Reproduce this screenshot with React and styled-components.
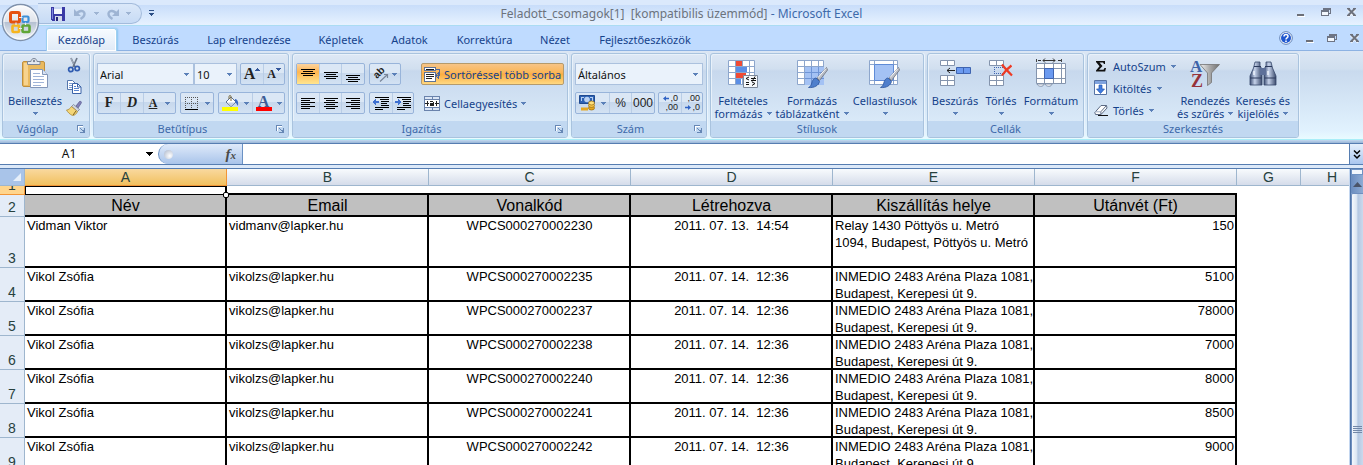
import React from "react";
import styled, { createGlobalStyle, css } from "styled-components";

const Global = createGlobalStyle`
  * { box-sizing: border-box; }
  html, body { margin: 0; height: 100%; overflow: hidden; }
  body { font-family: "Noto Sans", "Open Sans", sans-serif; font-size: 11px; color: #15428b; }
  #root { height: 100%; }
  button, select, input { font: inherit; color: inherit; margin: 0; padding: 0; border: 0; background: none; }
  svg { display: block; flex: none; overflow: visible; }
`;

const Window = styled.div`
  display: flex;
  flex-direction: column;
  height: 100vh;
  overflow: hidden;
  background: #bfdbff;
`;

/* ---------- title bar ---------- */

const TitleBar = styled.header`
  position: relative;
  display: grid;
  grid-template-columns: 1fr auto 1fr;
  flex: none;
  height: 26px;
  border-bottom: 1px solid #abdcf3;
  background: linear-gradient(#dbe9fc 0 5px, #c8ddfa 5px, #e7f2ff 100%);
`;

const OrbButton = styled.button`
  position: absolute;
  z-index: 2;
  left: 1px;
  top: 3px;
`;

const QuickAccess = styled.div`
  display: flex;
  align-items: flex-start;
  gap: 7px;
  padding: 3px 0 0 38px;
`;

const QuickPill = styled.div`
  display: flex;
  align-items: center;
  width: 104px;
  height: 21px;
  padding-left: 13px;
  border: 1px solid #a3bbdb;
  border-left: 0;
  border-radius: 0 11px 11px 0;
  background: linear-gradient(#dbe8f9, #c7dbf5);
`;

const QuickButton = styled.button`
  display: grid;
  place-items: center;
  width: ${(p) => p.$w}px;
  height: 19px;
`;

const Caption = styled.h1`
  margin: 0;
  padding-top: 5px;
  font-size: 12px;
  font-weight: 400;
  line-height: 18px;
  color: #3e6aaa;
  white-space: pre;
`;

const DocumentName = styled.span`
  color: #6c737d;
`;

const WindowControls = styled.div`
  display: flex;
  justify-content: flex-end;
  align-items: center;
  gap: ${(p) => p.$gap}px;
  margin-left: auto;
  padding: 0 ${(p) => p.$end}px ${(p) => p.$lift ?? 0}px 0;
`;

const IconButton = styled.button`
  display: grid;
  place-items: center;
`;

/* ---------- tabs ---------- */

const TabBar = styled.nav`
  display: flex;
  flex: none;
  height: 25px;
  padding: 2px 0 0 43px;
  border-bottom: 1px solid #8db2e3;
  background: #bfdbff;
`;

const Tab = styled.button`
  width: ${(p) => p.$w}px;
  height: 23px;
  border-radius: 3px 3px 0 0;
  line-height: 22px;
  text-align: center;
  ${(p) =>
    p.$active &&
    css`
      width: ${p.$w - 4}px;
      margin: 0 1px 0 3px;
      background: linear-gradient(#f7fbff, #dfeaf7);
      border: 1px solid #9fd0f0;
      border-bottom: 0;
      box-shadow: inset 0 0 0 1px #fff, 1px 0 2px #86c4f0;
    `}
`;

/* ---------- ribbon ---------- */

const Ribbon = styled.section`
  display: flex;
  gap: 3px;
  flex: none;
  height: 89px;
  padding: 2px 2px 1px;
  border-bottom: 1px solid #a9eef8;
  background: linear-gradient(#dbe6f4 0, #d0dfef 18px, #c9daee 20px, #e1f2fe 80px, #e9fbff);
`;

const RibbonEdge = styled.div`
  flex: none;
  height: 4px;
  border-bottom: 1px solid #567db1;
  background: linear-gradient(#c3d9f0, #99b5d6);
`;

const GroupBox = styled.div`
  display: flex;
  flex-direction: column;
  flex: none;
  width: ${(p) => p.$w}px;
  height: 85px;
  border: 1px solid #a9c3de;
  border-radius: 3px;
  box-shadow: inset 1px 1px 0 #e8f1fa, 1px 0 0 #eaf4fd;
  background: linear-gradient(#dee8f5 0, #d1dfef 15px, #c7d8ed 17px, #d9e9f8 67px);
  overflow: hidden;
`;

const GroupBody = styled.div`
  display: flex;
  height: 67px;
  padding: 0 ${(p) => p.$pad ?? 3}px;
`;

const GroupFooter = styled.div`
  display: flex;
  align-items: center;
  height: 16px;
  background: #c1d8f1;
  color: #3e6aaa;
`;

const GroupTitle = styled.span`
  flex: 1;
  text-align: center;
  line-height: 16px;
`;

const Launcher = styled.button`
  display: grid;
  place-items: center;
  width: 17px;
  height: 16px;
`;

const Rows = styled.div`
  display: flex;
  flex-direction: column;
  gap: 7px;
  padding-top: 9px;
`;

const Row = styled.div`
  display: flex;
  gap: ${(p) => p.$gap ?? 4}px;
`;

const Cluster = styled.div`
  display: flex;
  height: 22px;
  border: 1px solid #98b4da;
  border-radius: 2px;
  background: linear-gradient(#dbe7f5 0 9px, #c6d7ec 9px, #d3e2f3);
`;

const ToolButton = styled.button`
  display: flex;
  align-items: center;
  justify-content: center;
  gap: ${(p) => p.$gap ?? 5}px;
  width: ${(p) => p.$w}px;
  height: 20px;
  & + & { border-left: 1px solid #b9cde6; }
  ${(p) =>
    p.$on &&
    css`
      background: linear-gradient(#fbd3a0, #ffb650 40%, #ffe58f);
    `}
`;

const Glyph = styled.span`
  font-family: "Liberation Serif", serif;
  font-size: ${(p) => p.$size ?? 16}px;
  font-weight: 700;
  line-height: 18px;
  font-style: ${(p) => (p.$italic ? "italic" : "normal")};
  text-decoration: ${(p) => (p.$under ? "underline" : "none")};
  color: ${(p) => p.$color ?? "#222"};
`;

const NumberGlyph = styled.span`
  font-family: "Liberation Sans Narrow", "Liberation Sans", sans-serif;
  font-size: 12px;
  line-height: 18px;
  color: #222;
`;

const DecimalGlyph = styled.span`
  display: flex;
  flex-direction: column;
  align-items: flex-end;
  width: 16px;
  font-family: "Liberation Sans Narrow", "Liberation Sans", sans-serif;
  font-size: 9px;
  line-height: 9px;
  color: #222;
`;

const DecimalLine = styled.span`
  display: flex;
  align-items: center;
  gap: 1px;
`;

const ComboFrame = styled.label`
  display: grid;
  align-items: center;
  width: ${(p) => p.$w}px;
  height: 22px;
  border: 1px solid #abc1de;
  background: #eaf2fb;
  & > * { grid-area: 1 / 1; }
  & > svg { justify-self: end; margin-right: 4px; pointer-events: none; }
`;

const ComboSelect = styled.select`
  appearance: none;
  width: 100%;
  height: 20px;
  padding-left: 2px;
  border-radius: 0;
  outline: 0;
  color: #111;
`;

const Divider = styled.span`
  width: 1px;
  height: 55px;
  margin: 6px 3px 0 4px;
  background: #9dbbe0;
`;

const WideButton = styled.button`
  display: flex;
  align-items: center;
  gap: 4px;
  width: 143px;
  height: 22px;
  padding-left: 2px;
  border: 1px solid ${(p) => (p.$on ? "#b49a6c" : "transparent")};
  border-radius: 2px;
  white-space: nowrap;
  ${(p) =>
    p.$on &&
    css`
      background: linear-gradient(#f6c487, #fbb554 45%, #fbac3f 50%, #ffd881);
    `}
`;

const LargeButton = styled.button`
  display: flex;
  flex-direction: column;
  align-items: center;
  width: ${(p) => p.$w}px;
  padding-top: 4px;
  line-height: 13px;
  white-space: nowrap;
  & > svg:first-child { margin-bottom: 4px; }
`;

const LabelLine = styled.span`
  display: flex;
  align-items: center;
  justify-content: center;
  gap: 4px;
  height: 13px;
`;

const SmallStack = styled.div`
  display: flex;
  flex-direction: column;
  gap: ${(p) => p.$gap ?? 0}px;
  padding-top: ${(p) => p.$top ?? 0}px;
  width: ${(p) => p.$w}px;
`;

const SmallButton = styled.button`
  display: flex;
  align-items: center;
  gap: 5px;
  height: 22px;
  white-space: nowrap;
`;

/* ---------- formula bar ---------- */

const FormulaBar = styled.div`
  display: flex;
  flex: none;
  height: 21px;
  border-bottom: 1px solid #567db1;
  background: #fff;
`;

const NameBox = styled.label`
  display: flex;
  align-items: center;
  width: 158px;
`;

const NameInput = styled.input`
  width: 138px;
  margin-right: 8px;
  outline: 0;
  text-align: center;
  font-size: 12px;
  line-height: 20px;
  color: #111;
`;

const FormulaTools = styled.div`
  display: flex;
  align-items: center;
  justify-content: space-between;
  width: 85px;
  padding: 0 5px;
  border: solid #6a91c4;
  border-width: 0 1px;
  border-radius: 11px 0 0 11px;
  background: linear-gradient(#dfeafa, #a9c4ea);
`;

const Knob = styled.span`
  width: 9px;
  height: 9px;
  border-radius: 50%;
  background: radial-gradient(circle at 65% 65%, #fff, #a9b4c8);
`;

const FxButton = styled.button`
  padding-right: 1px;
  font-family: "Liberation Serif", serif;
  font-size: 15px;
  font-weight: 700;
  font-style: italic;
  line-height: 18px;
  color: #4a4a4a;
  & > small { font-size: 11px; }
`;

const FormulaInput = styled.input`
  flex: 1;
  min-width: 0;
  padding: 0 4px;
  outline: 0;
`;

const ExpandButton = styled.button`
  display: grid;
  place-items: center;
  width: 14px;
  border-left: 1px solid #567db1;
  background: linear-gradient(#e6f0fc, #a9c6ef);
`;

const SheetEdge = styled.div`
  flex: none;
  height: 4px;
  border-bottom: 1px solid #567db1;
  background: #dce9f9;
`;

/* ---------- sheet ---------- */

const SheetArea = styled.main`
  display: flex;
  flex: 1;
  min-height: 0;
  background: #fff;
`;

const SheetViewport = styled.div`
  flex: 1;
  min-width: 0;
  overflow: hidden;
  border-right: 1px solid #c4d7f0;
`;

const Sheet = styled.table`
  width: calc(100% + 15px);
  table-layout: fixed;
  border-collapse: separate;
  border-spacing: 0;
  font-family: "Liberation Sans", Arial, sans-serif;
  font-size: 13px;
  line-height: 17px;
  color: #000;
`;

const ColumnHead = styled.th`
  height: 17px;
  padding: 0;
  border: solid #9eb6ce;
  border-width: 0 1px 1px 0;
  background: linear-gradient(#f8fbfd, #d5dcea);
  color: #27413e;
  font-size: 14px;
  font-weight: 400;
  line-height: 16px;
  ${(p) =>
    p.$selected &&
    css`
      border-color: #f29536;
      background: linear-gradient(#f9d99f, #f1c15f);
    `}
`;

const Corner = styled.td`
  padding: 0;
  border: solid #9eb6ce;
  border-width: 0 1px 1px 0;
  background: #a9c4e9;
  & > svg { margin: 0 2px 0 auto; }
`;

const RowHead = styled.th`
  padding: 0;
  border: solid #9eb6ce;
  border-width: 0 1px 1px 0;
  background: ${(p) => (p.$selected ? "#ffd58d" : "#e4ecf7")};
  ${(p) => p.$selected && "border-color: #f29536;"}
  color: #27413e;
  font-size: 14px;
  font-weight: 400;
  vertical-align: bottom;
`;

const RowNumber = styled.div`
  display: flex;
  align-items: flex-end;
  justify-content: center;
  height: ${(p) => p.$h}px;
  overflow: hidden;
`;

const Cell = styled.td`
  padding: 0;
  vertical-align: top;
  text-align: ${(p) => p.$align ?? "left"};
  ${(p) => p.$framed && "border: solid #000; border-width: 0 2px 2px 0;"}
  ${(p) => p.$under && "border-bottom: 2px solid #000;"}
  ${(p) => p.$heading && "background: #c0c0c0; font-size: 16px; line-height: 21px;"}
`;

const CellText = styled.div`
  height: ${(p) => p.$h}px;
  padding: 0 1px 0 2px;
  overflow: hidden;
  white-space: pre;
`;

const ActiveCell = styled.td`
  position: relative;
  padding: 0;
  border: solid #000;
  border-width: 1px 2px 1px 1px;
`;

const FillHandle = styled.span`
  position: absolute;
  z-index: 1;
  right: -4px;
  bottom: -4px;
  width: 6px;
  height: 6px;
  border: 1px solid #000;
  border-radius: 2px;
  background: #fff;
`;

const ScrollBar = styled.div`
  display: flex;
  flex-direction: column;
  flex: none;
  width: 13px;
  border-left: 1px solid #4f74a8;
  background: #8faed6;
`;

const SplitHandle = styled.span`
  height: 6px;
  border: 1px solid #6f93c4;
  background: #f2f7fd;
`;

const ScrollUp = styled.button`
  display: grid;
  place-items: center;
  height: 18px;
  background: linear-gradient(90deg, #6b8dbf, #8dabd4);
`;

const ScrollThumb = styled.div`
  display: flex;
  flex-direction: column;
  justify-content: flex-end;
  align-items: center;
  flex: 1;
  padding-bottom: 31px;
  border: solid #6f8fbf;
  border-width: 1px 0 0 1px;
  border-radius: 2px 0 0 0;
  background: linear-gradient(90deg, #f4f8fd, #dde7f3 40%, #b3c7e2 55%, #cbd9ec);
`;

/* ---------- icons ---------- */

const Svg = ({ w, h, children, crisp, ...rest }) => (
  <svg width={w} height={h} viewBox={`0 0 ${w} ${h}`} fill="none" aria-hidden="true" shapeRendering={crisp ? "crispEdges" : "auto"} {...rest}>
    {children}
  </svg>
);

const Arrow = ({ color = "#5b80b8" }) => (
  <Svg w={5} h={3} crisp>
    <path d="M0 0h5v1H0zM1 1h3v1H1zM2 2h1v1H2z" fill={color} />
  </Svg>
);

const Orb = () => (
  <Svg w={39} h={39}>
    <defs>
      <linearGradient id="orb" x1="0" y1="0" x2="0" y2="1">
        <stop offset="0" stopColor="#fdfdfe" />
        <stop offset=".48" stopColor="#dfe3ea" />
        <stop offset=".5" stopColor="#b6c1d2" />
        <stop offset="1" stopColor="#fafcff" />
      </linearGradient>
    </defs>
    <circle cx="19.500" cy="19.500" r="18" fill="url(#orb)" stroke="#7f91ab" strokeWidth="1.300" />
    <circle cx="19.500" cy="19.500" r="16.600" stroke="#fff" strokeOpacity=".7" />
    <rect x="9.500" y="9.500" width="9" height="9.500" rx="1.500" stroke="#e5500f" strokeWidth="3" />
    <rect x="21.500" y="13.500" width="6" height="5.500" rx="1" stroke="#3c8fd8" strokeWidth="2.200" />
    <rect x="11.500" y="22.500" width="6.500" height="6.500" rx="1" stroke="#f6b51e" strokeWidth="2.600" />
    <rect x="21.500" y="22.500" width="7" height="6.500" rx="1" stroke="#5fa637" strokeWidth="2.600" />
    <path d="M18 14.500h3.500M18 25.500h3M15 19.500v2.500M24.500 19.500v2.500" stroke="#e8eef6" strokeWidth="1.200" />
  </Svg>
);

const Save = () => (
  <Svg w={14} h={14} crisp>
    <path d="M0 0h14v14H1l-1-1z" fill="#3a3aa6" />
    <path d="M1 1h1v11H1z" fill="#7d86dd" />
    <path d="M3 0h8v7H3z" fill="#f4f7fd" />
    <path d="M3 0h8v2H3z" fill="#c7d6f2" />
    <path d="M4 9h7v5H4z" fill="#d3d9ea" />
    <path d="M5 10h2v4H5z" fill="#25257a" />
  </Svg>
);

const Undo = () => (
  <Svg w={14} h={14}>
    <path d="M3.500 7.500C5 3.500 11 2.500 11.500 6.500c.2 2.500-1.500 4-4 5.500" stroke="#9eb4d3" strokeWidth="2.400" />
    <path d="M1 2v7h7z" fill="#9eb4d3" />
  </Svg>
);

const Redo = () => (
  <Svg w={14} h={14}>
    <path d="M10.500 7.500C9 3.500 3 2.500 2.500 6.500c-.2 2.500 1.500 4 4 5.500" stroke="#9eb4d3" strokeWidth="2.400" />
    <path d="M13 2v7H6z" fill="#9eb4d3" />
  </Svg>
);

const Customize = () => (
  <Svg w={5} h={6} crisp>
    <path d="M0 0h5v1H0zM0 3h5v1H0zM1 4h3v1H1zM2 5h1v1H2z" fill="#2c4f86" />
  </Svg>
);

const Minimize = () => (
  <Svg w={8} h={9} crisp>
    <path d="M0 6h7v2H0z" fill="#6c6f78" />
    <path d="M1 8h7v1H1z" fill="#fff" />
  </Svg>
);

const Restore = () => (
  <Svg w={10} h={9} crisp>
    <path d="M2 0h8v2H2zM9 2h1v4H9zM8 5h1v1H8z" fill="#6d7484" />
    <path d="M0 2h8v2H0zM0 4h1v4H0zM7 4h1v4H7zM0 7h8v1H0z" fill="#6d7484" />
    <path d="M1 4h6v3H1z" fill="#f2f7fd" />
  </Svg>
);

const Close = () => (
  <Svg w={9} h={9}>
    <path d="M1 1.500l7 7M8 1.500l-7 7" stroke="#fff" strokeWidth="2" />
    <path d="M1 .5l7 7M8 .5l-7 7" stroke="#6d717c" strokeWidth="2" />
    <path d="M0 .5h3M6 .5h3M0 7.500h3M6 7.500h3" stroke="#6d717c" />
  </Svg>
);

const Help = () => (
  <Svg w={14} h={14}>
    <circle cx="7" cy="7" r="6.300" fill="#fff" stroke="#5d7fb6" />
    <circle cx="7" cy="7" r="5" fill="#1f57cf" />
    <path d="M5 5.500c0-2.600 4-2.600 4-.2C9 7 7 6.800 7 8.500" stroke="#fff" strokeWidth="1.500" />
    <path d="M6.200 9.500h1.600V11H6.200z" fill="#fff" />
  </Svg>
);

const LauncherIcon = () => (
  <Svg w={8} h={8} crisp>
    <path d="M0 0h6v1H1v5H0z" fill="#6687b5" />
    <path d="M1 1h5v1H2v4H1z" fill="#fff" />
    <path d="M3 3h1v1H3zM4 4h1v1H4zM7 3h1v5H3V7h3V6H5V5h2z" fill="#6687b5" />
  </Svg>
);

const Paste = () => (
  <Svg w={28} h={32}>
    <rect x="1.500" y="3.500" width="22" height="25" rx="1.500" fill="#e9b95f" stroke="#c08f3c" />
    <path d="M3 5h4v22H3z" fill="#f7d38e" />
    <path d="M6.500 6.500V3.500h3.500c0-4 6-4 6 0h3v3z" fill="#e4e9f0" stroke="#7e889a" />
    <circle cx="13" cy="3" r="1.200" fill="#7e889a" />
    <path d="M9.500 11.500h12l5 5v13h-17z" fill="#fff" stroke="#8296b8" />
    <path d="M21.500 11.500v5h5" fill="#d8e3f4" stroke="#8296b8" />
    <path d="M12 15.500h7M12 18.500h11M12 21.500h11M12 24.500h11M12 27.500h8" stroke="#9fb4d8" />
  </Svg>
);

const Cut = () => (
  <Svg w={14} h={15}>
    <path d="M4 0l4 9M10 0L6 9" stroke="#6b7688" strokeWidth="1.700" />
    <path d="M4 0l2.500 6" stroke="#cdd5e0" strokeWidth=".6" />
    <circle cx="3.800" cy="11.500" r="2.200" stroke="#2f5bb0" strokeWidth="1.700" />
    <circle cx="10.200" cy="10.500" r="2.200" stroke="#2f5bb0" strokeWidth="1.700" />
  </Svg>
);

const Copy = () => (
  <Svg w={15} h={14}>
    <path d="M.5.5h5l3 3v6h-8z" fill="#fff" stroke="#5577ad" />
    <path d="M2 3.500h3M2 5.500h4M2 7.500h4" stroke="#7d9cd0" />
    <path d="M5.500 3.500h5l3.500 3.500v6.500H5.500z" fill="#fff" stroke="#3b63a8" />
    <path d="M10.500 3.500V7H14" stroke="#3b63a8" />
    <path d="M7 6.500h2M7 8.500h5M7 10.500h5" stroke="#5a85cf" />
  </Svg>
);

const Brush = () => (
  <Svg w={16} h={15}>
    <path d="M10 5l3.500-4.500c1.500-.5 2.500.5 1.500 2L12 7z" fill="#8282b8" stroke="#55558c" strokeWidth=".7" />
    <path d="M7.500 3.500l6 5-2 2-6-5z" fill="#cfd6e3" stroke="#6c7688" strokeWidth=".7" />
    <path d="M5.500 5.500l6 5c-1 2.500-3 4-5 4C4 13.500 1.500 11 .5 9c2 0 3.500-1.500 5-3.500z" fill="#f4d678" stroke="#a98a3c" strokeWidth=".8" />
    <path d="M7 14l3-4" stroke="#7b5d1d" />
  </Svg>
);

const SizeMark = ({ down }) => (
  <Svg w={5} h={14} crisp>
    <path d={down ? "M0 1h5v1H0zM1 2h3v1H1zM2 3h1v1H2z" : "M2 1h1v1H2zM1 2h3v1H1zM0 3h5v1H0z"} fill="#33569a" />
  </Svg>
);

const Borders = () => (
  <Svg w={13} h={13} crisp>
    <path d="M0 .5h13M0 6.500h13" stroke="#555" strokeDasharray="1 1" />
    <path d="M.5 0v12M6.500 0v12M12.500 0v12" stroke="#555" strokeDasharray="1 1" />
    <path d="M0 12h13v1H0z" fill="#000" />
  </Svg>
);

const Fill = () => (
  <Svg w={17} h={16}>
    <path d="M4 7l5-5 5 5-5 4.500z" fill="#fff" stroke="#5a6f92" />
    <path d="M6 7.500h7l-4 3.500z" fill="#c5d3ea" />
    <path d="M9 6V1.500c0-1.300-2-1.300-2 0V4" stroke="#7a6a3c" />
    <path d="M13 4c3 .5 3.500 3 3 7-1-1-1.500-3-3-4z" fill="#3c6bc4" />
    <path d="M0 12h16v4H0z" fill="#ff0" shapeRendering="crispEdges" />
  </Svg>
);

const FontColor = styled.span`
  display: block;
  width: 16px;
  height: 16px;
  border-bottom: 4px solid #f00;
  text-align: center;
  font-family: "Liberation Serif", serif;
  font-size: 16px;
  font-weight: 700;
  line-height: 13px;
  color: #3d5d96;
`;

const Lines = ({ rows }) => (
  <Svg w={14} h={15} crisp>
    {rows.map(([x, y, len]) => (
      <path key={y} d={`M${x} ${y}h${len}v1h-${len}z`} fill="#000" />
    ))}
  </Svg>
);

const vertical = (top) => [
  [0, top, 14],
  [2, top + 2, 10],
  [0, top + 4, 14],
  [2, top + 6, 10],
];
const paragraph = (side) =>
  [0, 1, 2, 3, 4, 5].map((i) => {
    const len = i % 2 ? 9 : 14;
    return [side === "left" ? 0 : side === "right" ? 14 - len : Math.floor((14 - len) / 2), 2 + i * 2, len];
  });

const Orient = () => (
  <Svg w={16} h={15}>
    <text x="0" y="0" fontFamily="Liberation Sans, sans-serif" fontSize="10" fontWeight="700" fill="#222" transform="translate(4 12) rotate(-45)">ab</text>
    <path d="M7 14.500L14.500 7.500M11 7.500h3.500V11" stroke="#7a8699" strokeWidth="1.200" />
  </Svg>
);

const Indent = ({ out }) => (
  <Svg w={16} h={13} crisp>
    <path d="M2 .5h14M7 2.500h9M8 4.500h8M8 6.500h6M8 8.500h8M2 10.500h14M2 12.500h8" stroke="#000" />
    <path d={out ? "M3 2v2h3v2H3v2H2V7H1V6H0V4h1V3h1V2z" : "M3 2v2H0v2h3v2h1V7h1V6h1V4H5V3H4V2z"} fill="#3e6fd0" />
  </Svg>
);

const Wrap = () => (
  <Svg w={16} h={15} crisp>
    <path d="M.5.5h11v3H.5z" fill="#fff" stroke="#5e7396" />
    <path d="M2 2h8" stroke="#111" />
    <path d="M.5 5.500h11v9H.5z" fill="#fff" stroke="#5e7396" />
    <path d="M2 7.500h8M2 9.500h8M2 11.500h6" stroke="#222" />
    <path d="M12 2.500h3.500v6H13M14 6v5l-2-2.500z" stroke="#4a669b" />
  </Svg>
);

const Merge = () => (
  <Svg w={16} h={15} crisp>
    <path d="M.5.5h15v14H.5z" fill="#dbe6f6" stroke="#6a83ac" />
    <path d="M8 0v4M8 11v4M0 3.500h16M0 11.500h16" stroke="#6a83ac" />
    <path d="M1 4h14v7H1z" fill="#fff" />
    <path d="M1 7h4v1H1zM3 5h1v5H3zM11 7h4v1h-4zM12 5h1v5h-1z" fill="#222" />
    <path d="M6 5h3v1h1v4H6V7h3V6H6z" fill="#222" />
  </Svg>
);

const Money = () => (
  <Svg w={17} h={16}>
    <path d="M.5.5h15v8H.5z" fill="#2e62b3" stroke="#1f4a91" />
    <circle cx="8" cy="4.500" r="2.800" fill="#b8d0f2" />
    <path d="M2 2h3v1H3v3H2zM11 2h3v4h-1V3h-2z" fill="#b8d0f2" />
    <path d="M2 12.500h7v3H2z" fill="#e5a822" />
    <ellipse cx="12.500" cy="13" rx="3" ry="2" fill="#e5a822" stroke="#9b6c0c" strokeWidth=".7" />
    <ellipse cx="12.500" cy="10.500" rx="3" ry="2" fill="#f3c348" stroke="#9b6c0c" strokeWidth=".7" />
    <ellipse cx="12.500" cy="8" rx="3" ry="2" fill="#ffe07c" stroke="#9b6c0c" strokeWidth=".7" />
  </Svg>
);

const TinyArrow = ({ right }) => (
  <Svg w={6} h={5}>
    <path d={right ? "M6 2.500L3 0v1.800H0v1.500h3V5z" : "M0 2.500L3 0v1.800h3v1.500H3V5z"} fill="#2f62c4" />
  </Svg>
);

const gridLines = "M.5.500h26v24H.5zM7.500 0v25M14.500 0v25M21.500 0v25M0 6.500h27M0 12.500h27M0 18.500h27";

const BigBrush = () => (
  <g>
    <path d="M29.500 7.500L20 18l2.500 2.500L30.500 10z" fill="#b9bec7" stroke="#6b6f79" strokeWidth=".8" />
    <path d="M29 8.500l-8 9" stroke="#fff" />
    <path d="M19 18l3.500 3.500c-1 4-5 6.500-11 6 3.500-1.500 3-5.500 4.500-7.500.8-1.200 1.800-2 3-2z" fill="#4f7fcc" stroke="#2d569d" strokeWidth=".8" />
  </g>
);

const Conditional = () => (
  <Svg w={32} h={32}>
    <g transform="translate(1 2)">
      <path d={gridLines} fill="#fff" stroke="#8da6cc" />
      <path d="M8 1h6v5H8zM8 13h10v5H8z" fill="#ef4a35" />
      <path d="M8 7h11v5H8zM8 19h5v5H8z" fill="#5b8ee6" />
      <path d="M15.500 15.500h14v12h-14z" fill="#f6f8fb" stroke="#7c8899" />
      <path d="M21 17l-3 1.500 3 1.500M18 22.500h3M18 24.500h3M23 18.500h5M23 20.500h5M27 16.500l-3 5M24 22l3 1.500-3 2" stroke="#111" />
    </g>
  </Svg>
);

const FormatTable = () => (
  <Svg w={32} h={32}>
    <g transform="translate(1 2)">
      <path d={gridLines} fill="#fff" stroke="#8da6cc" />
      <path d="M8 7h19v18H8z" fill="#a4c2f4" />
      <path d="M14.500 7v18M21.500 7v18M8 12.500h19M8 18.500h19" stroke="#6f95d6" />
      <BigBrush />
    </g>
  </Svg>
);

const CellStyle = () => (
  <Svg w={32} h={32}>
    <g transform="translate(0 2)">
      <path d="M.5.500h28v24H.5zM5.500 0v25M24.500 0v25M0 4.500h29M0 20.500h29" fill="#fff" stroke="#8da6cc" />
      <path d="M5.500 4.500h19v16h-19z" fill="#a4c2f4" stroke="#5f8bd6" />
      <BigBrush />
    </g>
  </Svg>
);

const CellPair = ({ y, rows }) => (
  <path
    d={`M.5 ${y + 0.5}h14v${rows * 5}H.5zM7.500 ${y}v${rows * 5}${rows > 1 ? `M0 ${y + 5.5}h15` : ""}`}
    fill="#fff"
    stroke="#8494ad"
  />
);

const InsertCells = () => (
  <Svg w={32} h={32}>
    <g transform="translate(1 2)">
      <CellPair y={0} rows={1} />
      <CellPair y={15} rows={2} />
      <path d="M16.500 7.500h14v6h-14zM23.500 7v7" fill="#6b9af0" stroke="#3f64b0" />
      <path d="M7 10.500h8M10 8l-3 2.500L10 13" stroke="#222" />
    </g>
  </Svg>
);

const DeleteCells = () => (
  <Svg w={32} h={32}>
    <g transform="translate(4 2)">
      <CellPair y={0} rows={1} />
      <CellPair y={15} rows={2} />
      <path d="M5 7.500h12M5 13.500h12M5.500 7v7" stroke="#3f64b0" strokeDasharray="1 1" />
      <path d="M13 4.500c3 4 6 7 10 11M22.500 5.500c-4 3-7 6-9.500 10" stroke="#ee3a24" strokeWidth="2.200" />
    </g>
  </Svg>
);

const FormatCells = () => (
  <Svg w={32} h={32}>
    <path d="M1.500 1v3M26.500 1v3" stroke="#444" />
    <path d="M3 2.500h3M8 2.500h12M23 2.500h3M10 .5L8 2.500l2 2M18 .5l2 2-2 2" stroke="#333" />
    <path d="M1.500 5.500h29v20h-29zM9.500 5v21M18.500 5v21M26.500 5v21M1 10.500h30M1 20.500h30" fill="#fff" stroke="#8494ad" />
    <path d="M9.500 10.500h9v10h-9z" fill="#6b9af0" stroke="#3f64b0" />
    <path d="M2 26h7c0 3-6 3-7 0zM10 26h7c0 3-6 3-7 0z" fill="#fff" stroke="#8494ad" />
  </Svg>
);

const Sigma = () => (
  <Svg w={14} h={14}>
    <path d="M2 2h9v3h-1L9 3.500H5.500L8.500 7 5 10.800h4.500L10.500 9H12l-.8 3.500H2v-1L5.500 7.300 2 3z" fill="#111" />
  </Svg>
);

const FillDown = () => (
  <Svg w={14} h={16}>
    <path d="M.5.5h12v14H.5z" fill="#fff" stroke="#5572a4" />
    <path d="M1 1h11v3H1z" fill="#7fa3df" />
    <path d="M5 5h3v4h2.500l-4 4.500L2.500 9H5z" fill="#3f7be0" stroke="#2457b0" strokeWidth=".7" />
  </Svg>
);

const Eraser = () => (
  <Svg w={14} h={14}>
    <path d="M.8 9.500L7 2.500h5.500L13 5l-6 6.500H1.500z" fill="#fff" stroke="#5c6a83" />
    <path d="M7 11.500L6.800 8.800 12.500 2.500" stroke="#5c6a83" />
    <path d="M1 8.800h5.800" stroke="#9dabc2" />
    <path d="M4 12.500h10" stroke="#111" />
  </Svg>
);

const SortFilter = () => (
  <Svg w={32} h={32}>
    <text x="1" y="14" fontFamily="Liberation Serif, serif" fontSize="17" fontWeight="700" fill="#3f64a8">A</text>
    <text x="2" y="29" fontFamily="Liberation Serif, serif" fontSize="18" fontWeight="700" fill="#96323a">Z</text>
    <defs>
      <linearGradient id="funnel" x1="0" x2="1">
        <stop offset="0" stopColor="#f2f2f2" />
        <stop offset=".5" stopColor="#a9a9a9" />
        <stop offset="1" stopColor="#6f6f6f" />
      </linearGradient>
    </defs>
    <path d="M11 6.500h19.500L22.500 15v9.500l-4 3V15z" fill="url(#funnel)" stroke="#747474" strokeWidth=".8" />
  </Svg>
);

const Binoculars = () => (
  <Svg w={32} h={32}>
    <defs>
      <linearGradient id="tube" x1="0" x2="1">
        <stop offset="0" stopColor="#3d4f74" />
        <stop offset=".4" stopColor="#c5d2ea" />
        <stop offset="1" stopColor="#3a4a6c" />
      </linearGradient>
    </defs>
    <path d="M8 4h5v4l2 3v16H3v-9l3.500-8z" fill="url(#tube)" stroke="#35466b" strokeWidth=".8" />
    <path d="M19 4h5l1.500 6 3.500 8v9H17V11l2-3z" fill="url(#tube)" stroke="#35466b" strokeWidth=".8" />
    <path d="M13 10h6v7h-6z" fill="#5d7099" />
    <path d="M3 20h11.500M17.500 20H29M7 8.500h7M18 8.500h7" stroke="#2c3b5d" />
    <path d="M7 13v4M21 13v4" stroke="#eef3fc" strokeWidth="1.500" />
  </Svg>
);

const DoubleChevron = () => (
  <Svg w={8} h={9}>
    <path d="M1 .5l3 3 3-3M1 5l3 3 3-3" stroke="#000" strokeWidth="1.500" />
  </Svg>
);

/* ---------- assembly ---------- */

const tabs = [
  ["Kezdőlap", 75],
  ["Beszúrás", 75],
  ["Lap elrendezése", 112],
  ["Képletek", 72],
  ["Adatok", 65],
  ["Korrektúra", 85],
  ["Nézet", 56],
  ["Fejlesztőeszközök", 124],
];

function Group({ title, w, pad, launcher, children }) {
  return (
    <GroupBox $w={w}>
      <GroupBody $pad={pad}>{children}</GroupBody>
      <GroupFooter>
        <GroupTitle>{title}</GroupTitle>
        {launcher && (
          <Launcher aria-label={`${title} beállításai`}>
            <LauncherIcon />
          </Launcher>
        )}
      </GroupFooter>
    </GroupBox>
  );
}

function Large({ icon, first, second, w }) {
  return (
    <LargeButton $w={w}>
      {icon}
      <LabelLine>{first}</LabelLine>
      <LabelLine>
        {second}
        <Arrow />
      </LabelLine>
    </LargeButton>
  );
}

function Combo({ label, value, w }) {
  return (
    <ComboFrame $w={w}>
      <ComboSelect aria-label={label} defaultValue={value}>
        <option>{value}</option>
      </ComboSelect>
      <Arrow />
    </ComboFrame>
  );
}

const headings = ["Név", "Email", "Vonalkód", "Létrehozva", "Kiszállítás helye", "Utánvét (Ft)"];
const aligns = ["left", "left", "center", "center", "left", "right"];
const plaza = "INMEDIO 2483 Aréna Plaza 1081,\nBudapest, Kerepesi út 9.";
const zsofia = (code, sum) => ["Vikol Zsófia", "vikolzs@lapker.hu", code, "2011. 07. 14.\u00a0 12:36", plaza, sum];
const records = [
  ["Vidman Viktor", "vidmanv@lapker.hu", "WPCS000270002230", "2011. 07. 13.\u00a0 14:54", "Relay 1430 Pöttyös u. Metró\n1094, Budapest, Pöttyös u. Metró", "150"],
  zsofia("WPCS000270002235", "5100"),
  zsofia("WPCS000270002237", "78000"),
  zsofia("WPCS000270002238", "7000"),
  zsofia("WPCS000270002240", "8000"),
  zsofia("WPCS000270002241", "8500"),
  zsofia("WPCS000270002242", "9000"),
];

function Spreadsheet() {
  return (
    <Sheet>
      <colgroup>
        <col width="25" />
        {headings.map((h) => (
          <col key={h} width="202" />
        ))}
        <col width="64" />
        <col />
      </colgroup>
      <thead>
        <tr>
          <Corner>
            <Svg w={11} h={11}>
              <path d="M10 1v8H2z" fill="#e6effa" />
            </Svg>
          </Corner>
          {["A", "B", "C", "D", "E", "F", "G", "H"].map((c) => (
            <ColumnHead key={c} scope="col" $selected={c === "A"}>
              {c}
            </ColumnHead>
          ))}
        </tr>
      </thead>
      <tbody>
        <tr>
          <RowHead scope="row" $selected>
            <RowNumber $h={8}>1</RowNumber>
          </RowHead>
          <ActiveCell>
            <FillHandle />
          </ActiveCell>
          {headings.slice(1).map((h) => (
            <Cell key={h} $under />
          ))}
          <Cell />
          <Cell />
        </tr>
        <tr>
          <RowHead scope="row">
            <RowNumber $h={21}>2</RowNumber>
          </RowHead>
          {headings.map((h) => (
            <Cell key={h} $framed $heading $align="center">
              <CellText $h={20}>{h}</CellText>
            </Cell>
          ))}
          <Cell />
          <Cell />
        </tr>
        {records.map((record, r) => {
          const h = r === 0 ? 51 : 34;
          return (
            <tr key={record[2]}>
              <RowHead scope="row">
                <RowNumber $h={h - 1}>{r + 3}</RowNumber>
              </RowHead>
              {record.map((value, c) => (
                <Cell key={headings[c]} $framed $align={aligns[c]}>
                  <CellText $h={h - 2}>{value}</CellText>
                </Cell>
              ))}
              <Cell />
              <Cell />
            </tr>
          );
        })}
      </tbody>
    </Sheet>
  );
}

export default function App() {
  return (
    <Window>
      <Global />
      <TitleBar>
        <OrbButton aria-label="Office gomb">
          <Orb />
        </OrbButton>
        <QuickAccess>
          <QuickPill>
            <QuickButton $w={14} aria-label="Mentés"><Save /></QuickButton>
            <QuickButton $w={29} aria-label="Visszavonás"><Undo /></QuickButton>
            <QuickButton $w={5} aria-label="Visszavonási lista"><Arrow color="#9eb4d3" /></QuickButton>
            <QuickButton $w={27} aria-label="Mégis"><Redo /></QuickButton>
            <QuickButton $w={5} aria-label="Ismétlési lista"><Arrow color="#9eb4d3" /></QuickButton>
          </QuickPill>
          <QuickButton $w={5} aria-label="Testreszabás"><Customize /></QuickButton>
        </QuickAccess>
        <Caption>
          <DocumentName>{"Feladott_csomagok[1]  [kompatibilis üzemmód]"}</DocumentName>
          {" - Microsoft Excel"}
        </Caption>
        <WindowControls $gap={16} $end={7}>
          <IconButton aria-label="Kis méret"><Minimize /></IconButton>
          <IconButton aria-label="Előző méret"><Restore /></IconButton>
          <IconButton aria-label="Bezárás"><Close /></IconButton>
        </WindowControls>
      </TitleBar>

      <TabBar>
        {tabs.map(([name, w], i) => (
          <Tab key={name} $w={w} $active={i === 0}>{name}</Tab>
        ))}
        <WindowControls $gap={13} $end={4} $lift={2}>
          <IconButton aria-label="Súgó"><Help /></IconButton>
          <IconButton aria-label="Munkafüzet kis mérete"><Minimize /></IconButton>
          <IconButton aria-label="Munkafüzet előző mérete"><Restore /></IconButton>
          <IconButton aria-label="Munkafüzet bezárása"><Close /></IconButton>
        </WindowControls>
      </TabBar>

      <Ribbon>
        <Group title="Vágólap" w={88} launcher>
          <Large w={58} icon={<Paste />} first="Beillesztés" />
          <SmallStack $w={20} $gap={7} $top={4}>
            <IconButton aria-label="Kivágás"><Cut /></IconButton>
            <IconButton aria-label="Másolás"><Copy /></IconButton>
            <IconButton aria-label="Formátummásoló"><Brush /></IconButton>
          </SmallStack>
        </Group>

        <Group title="Betűtípus" w={196} launcher>
          <Rows>
            <Row $gap={0}>
              <Combo label="Betűtípus" value="Arial" w={97} />
              <Combo label="Betűméret" value="10" w={43} />
              <SmallStack $w={3} />
              <Cluster>
                <ToolButton $w={22} $gap={0} aria-label="Betűméret növelése"><Glyph>A</Glyph><SizeMark /></ToolButton>
                <ToolButton $w={21} $gap={0} aria-label="Betűméret csökkentése"><Glyph $size={12}>A</Glyph><SizeMark down /></ToolButton>
              </Cluster>
            </Row>
            <Row>
              <Cluster>
                <ToolButton $w={22} aria-label="Félkövér"><Glyph $size={14}>F</Glyph></ToolButton>
                <ToolButton $w={23} aria-label="Dőlt"><Glyph $size={14} $italic>D</Glyph></ToolButton>
                <ToolButton $w={32} $gap={8} aria-label="Aláhúzott"><Glyph $size={12} $under>A</Glyph><Arrow /></ToolButton>
              </Cluster>
              <Cluster>
                <ToolButton $w={32} $gap={7} aria-label="Szegélyek"><Borders /><Arrow /></ToolButton>
              </Cluster>
              <Cluster>
                <ToolButton $w={33} aria-label="Kitöltőszín"><Fill /><Arrow /></ToolButton>
                <ToolButton $w={32} aria-label="Betűszín"><FontColor>A</FontColor><Arrow /></ToolButton>
              </Cluster>
            </Row>
          </Rows>
        </Group>

        <Group title="Igazítás" w={276} launcher>
          <Rows>
            <Row>
              <Cluster>
                <ToolButton $w={22} $on aria-label="Felülre"><Lines rows={vertical(2)} /></ToolButton>
                <ToolButton $w={22} aria-label="Középre függőlegesen"><Lines rows={vertical(5)} /></ToolButton>
                <ToolButton $w={23} aria-label="Alulra"><Lines rows={vertical(8)} /></ToolButton>
              </Cluster>
              <Cluster>
                <ToolButton $w={30} $gap={3} aria-label="Tájolás"><Orient /><Arrow /></ToolButton>
              </Cluster>
            </Row>
            <Row>
              <Cluster>
                <ToolButton $w={22} aria-label="Balra"><Lines rows={paragraph("left")} /></ToolButton>
                <ToolButton $w={22} aria-label="Középre"><Lines rows={paragraph("center")} /></ToolButton>
                <ToolButton $w={23} aria-label="Jobbra"><Lines rows={paragraph("right")} /></ToolButton>
              </Cluster>
              <Cluster>
                <ToolButton $w={22} aria-label="Behúzás csökkentése"><Indent out /></ToolButton>
                <ToolButton $w={21} aria-label="Behúzás növelése"><Indent /></ToolButton>
              </Cluster>
            </Row>
          </Rows>
          <Divider />
          <Rows>
            <WideButton $on><Wrap />Sortöréssel több sorba</WideButton>
            <WideButton><Merge />Cellaegyesítés<Arrow /></WideButton>
          </Rows>
        </Group>

        <Group title="Szám" w={136} launcher>
          <Rows>
            <Combo label="Számformátum" value="Általános" w={128} />
            <Row $gap={3}>
              <Cluster>
                <ToolButton $w={33} aria-label="Könyvelési számformátum"><Money /><Arrow /></ToolButton>
                <ToolButton $w={22} aria-label="Százalék"><NumberGlyph>%</NumberGlyph></ToolButton>
                <ToolButton $w={23} aria-label="Ezres csoport"><NumberGlyph>000</NumberGlyph></ToolButton>
              </Cluster>
              <Cluster>
                <ToolButton $w={22} aria-label="Tizedeshelyek növelése">
                  <DecimalGlyph>
                    <DecimalLine><TinyArrow />,0</DecimalLine>
                    <DecimalLine>,00</DecimalLine>
                  </DecimalGlyph>
                </ToolButton>
                <ToolButton $w={21} aria-label="Tizedeshelyek csökkentése">
                  <DecimalGlyph>
                    <DecimalLine>,00</DecimalLine>
                    <DecimalLine><TinyArrow right />,0</DecimalLine>
                  </DecimalGlyph>
                </ToolButton>
              </Cluster>
            </Row>
          </Rows>
        </Group>

        <Group title="Stílusok" w={214} pad={1}>
          <Large w={62} icon={<Conditional />} first="Feltételes" second="formázás" />
          <Large w={76} icon={<FormatTable />} first="Formázás" second="táblázatként" />
          <Large w={70} icon={<CellStyle />} first="Cellastílusok" />
        </Group>

        <Group title="Cellák" w={157} pad={3}>
          <Large w={48} icon={<InsertCells />} first="Beszúrás" />
          <Large w={44} icon={<DeleteCells />} first="Törlés" />
          <Large w={56} icon={<FormatCells />} first="Formátum" />
        </Group>

        <Group title="Szerkesztés" w={212} pad={6}>
          <SmallStack $w={85} $top={1}>
            <SmallButton><Sigma />AutoSzum<Arrow /></SmallButton>
            <SmallButton><FillDown />Kitöltés<Arrow /></SmallButton>
            <SmallButton><Eraser />Törlés<Arrow /></SmallButton>
          </SmallStack>
          <Large w={58} icon={<SortFilter />} first="Rendezés" second="és szűrés" />
          <Large w={60} icon={<Binoculars />} first="Keresés és" second="kijelölés" />
        </Group>
      </Ribbon>
      <RibbonEdge />

      <FormulaBar>
        <NameBox>
          <NameInput aria-label="Név mező" defaultValue="A1" />
          <Svg w={7} h={4} crisp>
            <path d="M0 0h7v1H0zM1 1h5v1H1zM2 2h3v1H2zM3 3h1v1H3z" fill="#000" />
          </Svg>
        </NameBox>
        <FormulaTools>
          <Knob />
          <FxButton aria-label="Függvény beszúrása">f<small>x</small></FxButton>
        </FormulaTools>
        <FormulaInput aria-label="Szerkesztőléc" />
        <ExpandButton aria-label="Szerkesztőléc kibontása"><DoubleChevron /></ExpandButton>
      </FormulaBar>
      <SheetEdge />

      <SheetArea>
        <SheetViewport>
          <Spreadsheet />
        </SheetViewport>
        <ScrollBar>
          <SplitHandle />
          <ScrollUp aria-label="Görgetés felfelé">
            <Svg w={9} h={5}>
              <path d="M4.500 0L9 5H0z" fill="#4a5468" />
            </Svg>
          </ScrollUp>
          <ScrollThumb>
            <Svg w={9} h={8} crisp>
              <path d="M0 .5h9M0 2.500h9M0 4.500h9M0 6.500h9" stroke="#7388a8" />
            </Svg>
          </ScrollThumb>
        </ScrollBar>
      </SheetArea>
    </Window>
  );
}
